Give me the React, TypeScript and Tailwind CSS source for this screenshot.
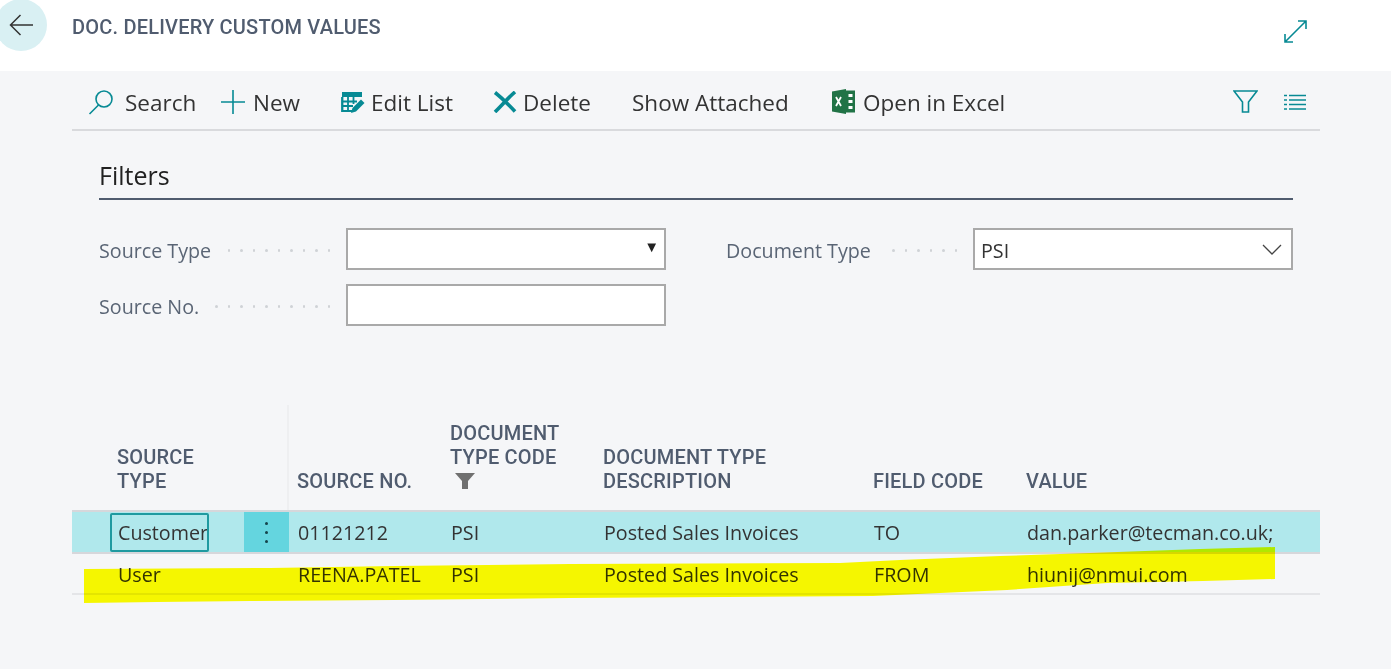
const body = { fontFamily: '"Open Sans", "Noto Sans", sans-serif' };
const din = { fontFamily: 'Roboto, "Liberation Sans", sans-serif' };

function Dots({ count }: { count: number }) {
  return (
    <div className="flex flex-1 items-center justify-end gap-[10px] pr-[16px]">
      {Array.from({ length: count }).map((_, i) => (
        <span key={i} className="h-[2.5px] w-[2.5px] rounded-full bg-[#cfd2d6]" />
      ))}
    </div>
  );
}

function FilterRow({ label, dots, children }: { label: string; dots: number; children?: React.ReactNode }) {
  return (
    <div className="flex h-[42px] items-center">
      <div className="flex w-[247px] items-center pt-[3px] text-[19.7px] text-[#5a6575]">
        <span>{label}</span>
        <Dots count={dots} />
      </div>
      <div className="relative flex h-full w-[320px] items-center border-2 border-[#a9a9a9] bg-white px-[6px]">
        {children}
      </div>
    </div>
  );
}

function ToolItem({ icon, label, className }: { icon?: React.ReactNode; label: string; className: string }) {
  return (
    <div className={`flex items-center ${className}`}>
      {icon}
      <span className="pt-[2px]">{label}</span>
    </div>
  );
}

const columns = "grid grid-cols-[172px_45px_154px_153px_270px_153px_301px]";

function HeaderCell({ lines, extra, className }: { lines: string[]; extra?: React.ReactNode; className: string }) {
  return (
    <div className={`flex flex-col justify-end pb-[17px] ${className}`}>
      {lines.map((l) => (
        <div key={l} className="h-[24px] leading-[24px]">
          {l}
        </div>
      ))}
      {extra}
    </div>
  );
}

export default function App() {
  return (
    <div className="relative h-[669px] w-[1391px] overflow-hidden bg-[#f5f6f8]" style={body}>
      {/* page title */}
      <header className="relative flex h-[71px] items-start bg-white">
        <div className="ml-[-5px] mt-[-1px] flex h-[52px] w-[52px] items-center justify-center rounded-full bg-[#d9f0f3]">
          <svg width="25" height="22" viewBox="0 0 25 22" fill="none" stroke="#333" strokeWidth="1.5" className="ml-[1px]">
            <path d="M24 11H2M11.500 1 1.500 11l10 10" />
          </svg>
        </div>
        <h1 className="ml-[25px] mt-[14px] text-[20px] font-medium leading-[26px] tracking-[0.2px] text-[#505c6f]" style={din}>
          DOC. DELIVERY CUSTOM VALUES
        </h1>
        <svg width="23" height="23" viewBox="0 0 23 23" fill="none" stroke="#078a94" strokeWidth="1.6" className="ml-auto mr-[84px] mt-[20px]">
          <path d="M1.500 21.500 21.500 1.500M14 1h8v8M9 22H1v-8" />
        </svg>
      </header>

      {/* action bar */}
      <nav className="ml-[72px] mr-[71px] flex h-[60px] items-center border-b-2 border-[#d9dadd] pt-[3px] text-[22.5px] text-[#333]">
        <ToolItem
          label="Search"
          className="ml-[16px] w-[133px]"
          icon={
            <svg width="26" height="26" viewBox="0 0 26 26" fill="none" stroke="#078a94" strokeWidth="1.6" className="mr-[11px]">
              <circle cx="16" cy="10" r="8" />
              <path d="M10.500 16 1.500 25" />
            </svg>
          }
        />
        <ToolItem
          label="New"
          className="w-[120px]"
          icon={
            <svg width="24" height="24" viewBox="0 0 24 24" fill="none" stroke="#078a94" strokeWidth="1.6" className="mr-[8px]">
              <path d="M12 0v24M0 12h24" />
            </svg>
          }
        />
        <ToolItem
          label="Edit List"
          className="w-[152px]"
          icon={
            <svg width="24" height="24" viewBox="0 0 24 24" className="mr-[6px]">
              <path d="M1 2h20v5H1z" fill="#078a94" />
              <path d="M1 7v14h12M1.500 7v14M7 7v14M12.500 7v7M1 11.500h15M1 16h11" fill="none" stroke="#078a94" strokeWidth="1.800" />
              <path d="M10 23l1.500-5L20 9.500l3.500 3.500L15 21.500z" fill="#078a94" />
            </svg>
          }
        />
        <ToolItem
          label="Delete"
          className="w-[139px]"
          icon={
            <svg width="24" height="22" viewBox="0 0 24 22" fill="none" stroke="#078a94" strokeWidth="3.600" className="mr-[6px]">
              <path d="M2 1.500C9 7 15 13 22 20.500M22 1C15 7 9 14 2 21" />
            </svg>
          }
        />
        <ToolItem label="Show Attached" className="w-[200px]" />
        <ToolItem
          label="Open in Excel"
          className=""
          icon={
            <svg width="24" height="25" viewBox="0 0 24 25" className="mr-[7px]">
              <path d="M14 1.500h9v22h-9z" fill="#217346" />
              <path d="M0 2.500 14 0v25L0 22.500z" fill="#217346" />
              <path d="M16.500 5h4v3h-4zM16.500 11h4v3h-4zM16.500 17h4v3h-4z" fill="#fff" />
              <path d="M4 8l5 9M9 8l-5 9" stroke="#fff" strokeWidth="1.800" fill="none" />
            </svg>
          }
        />
        <div className="ml-auto mr-[14px] flex items-center gap-[26px]">
          <svg width="25" height="23" viewBox="0 0 25 23" fill="none" stroke="#078a94" strokeWidth="1.600">
            <path d="M1 1h23l-8.500 11v10h-6V12z" />
          </svg>
          <svg width="22" height="16" viewBox="0 0 22 16" fill="none" stroke="#078a94" strokeWidth="1.500">
            <path d="M0 1.500h3M5 1.500h17M0 6h3M5 6h17M0 10.500h3M5 10.500h17M0 15h3M5 15h17" />
          </svg>
        </div>
      </nav>

      {/* filters */}
      <section className="ml-[99px] mr-[98px] mt-[26px]">
        <h2 className="border-b-2 border-[#505c6f] pb-[5px] text-[25px] font-medium leading-[36px] text-[#212121]">Filters</h2>
        <div className="mt-[28px] flex gap-[60px]">
          <div className="flex flex-col gap-[14px]">
            <FilterRow label="Source Type" dots={9}>
              <span className="ml-auto mr-[-1px] mt-[-5px] text-[15px] leading-none text-[#222]">▼</span>
            </FilterRow>
            <FilterRow label="Source No." dots={10} />
          </div>
          <div className="flex h-[42px] flex-1 items-center">
            <div className="flex w-[247px] items-center pt-[3px] text-[19.7px] text-[#5a6575]">
              <span>Document Type</span>
              <Dots count={6} />
            </div>
            <div className="flex h-full flex-1 items-center justify-between border-2 border-[#a9a9a9] bg-white px-[6px] text-[19.7px] text-[#333]">
              <span className="pt-[3px]">PSI</span>
              <svg width="20" height="11" viewBox="0 0 20 11" fill="none" stroke="#444" strokeWidth="1.300" className="mr-[3px]">
                <path d="M1 1l9 9 9-9" />
              </svg>
            </div>
          </div>
        </div>
      </section>

      {/* list */}
      <section className="ml-[72px] mr-[71px] mt-[79px] text-[19.7px] text-[#333]">
        <div className={`${columns} h-[105px] text-[20px] font-medium tracking-[0.2px] text-[#505c6f]`} style={din}>
          <HeaderCell lines={["SOURCE", "TYPE"]} className="pl-[45px]" />
          <div className="border-r-2 border-[#eeeff1]" />
          <HeaderCell lines={["SOURCE NO."]} className="pl-[8px]" />
          <HeaderCell
            lines={["DOCUMENT", "TYPE CODE"]}
            className="pl-[7px]"
            extra={
              <div className="flex h-[24px] items-center pl-[5px]">
                <svg width="20" height="16" viewBox="0 0 20 16" fill="#707070">
                  <path d="M0 0h20l-7 8v8H7V8z" />
                </svg>
              </div>
            }
          />
          <HeaderCell lines={["DOCUMENT TYPE", "DESCRIPTION"]} className="pl-[7px]" />
          <HeaderCell lines={["FIELD CODE"]} className="pl-[7px]" />
          <HeaderCell lines={["VALUE"]} className="pl-[7px]" />
        </div>
        <div className={`${columns} h-[44px] items-center border-y-2 border-[#d6d7db] bg-[#b0e8ec]`}>
          <div className="flex h-full items-center pl-[38px]">
            <div className="flex h-[39px] w-[99px] items-center overflow-hidden rounded-[2px] border-2 border-[#1f9aa0] pl-[6px] pt-[2px]">
              Customer
            </div>
          </div>
          <div className="flex h-full items-center justify-center bg-[#64d5df]">
            <span className="flex flex-col gap-[6px]">
              <span className="h-[3px] w-[3px] rounded-full bg-[#14434a]" />
              <span className="h-[3px] w-[3px] rounded-full bg-[#14434a]" />
              <span className="h-[3px] w-[3px] rounded-full bg-[#14434a]" />
            </span>
          </div>
          <div className="pl-[9px] pt-[2px]">01121212</div>
          <div className="pl-[8px] pt-[2px]">PSI</div>
          <div className="pl-[8px] pt-[2px]">Posted Sales Invoices</div>
          <div className="pl-[8px] pt-[2px]">TO</div>
          <div className="pl-[8px] pt-[2px]">dan.parker@tecman.co.uk;</div>
        </div>
        <div className={`${columns} h-[41px] items-center border-b-2 border-[#e4e5e8]`}>
          <div className="pl-[46px] pt-[2px]">User</div>
          <div />
          <div className="pl-[9px] pt-[2px]">REENA.PATEL</div>
          <div className="pl-[8px] pt-[2px]">PSI</div>
          <div className="pl-[8px] pt-[2px]">Posted Sales Invoices</div>
          <div className="pl-[8px] pt-[2px]">FROM</div>
          <div className="pl-[8px] pt-[2px]">hiunij@nmui.com</div>
        </div>
      </section>

      {/* highlighter scribble over the second row */}
      <svg width="1391" height="669" className="pointer-events-none absolute left-0 top-0 mix-blend-multiply">
        <path
          d="M84 569 270 568 395 566 570 564 840 563 900 560 1000 556 1090 553 1200 549 1275 547V579L1203 581 1107 583 1007 590 940 593 873 596 570 598 394 600 250 601 157 602 84 603Z"
          fill="#ffff00"
        />
      </svg>
    </div>
  );
}
